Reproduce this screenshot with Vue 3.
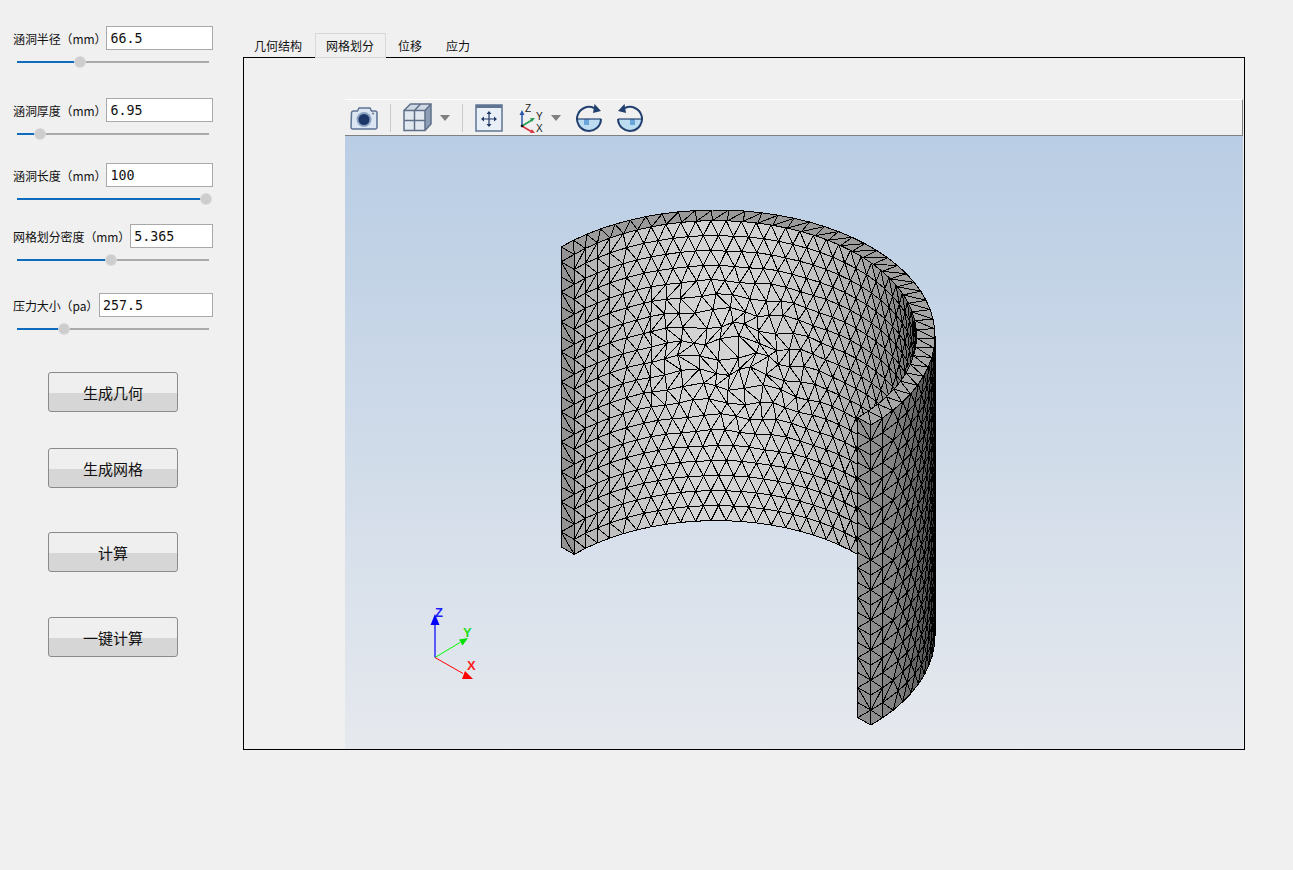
<template>
  <div class="page">
    <div class="side">
      <div class="group" v-for="item in params" :key="item.label">
        <div class="row">
          <label class="lab">{{ item.label }}</label>
          <input class="num" type="text" :value="item.value" :style="{ width: item.box + 'px' }" />
        </div>
        <div class="track">
          <div class="fill" :style="{ width: item.pos + 'px' }"></div>
          <div class="thumb" :style="{ left: item.pos + 'px' }"></div>
        </div>
      </div>
      <button class="btn" v-for="name in buttons" :key="name">{{ name }}</button>
    </div>

    <div class="main">
      <div class="tabs">
        <div class="tab" v-for="(name, index) in tabs" :key="name" :class="{ on: index === 1 }">{{ name }}</div>
      </div>
      <div class="frame">
        <div class="viewer">
          <div class="tools">
            <svg class="camera" width="28" height="26" viewBox="0 0 28 26">
              <path d="M1.5 8a2 2 0 0 1 2-2h4l1.500-3h11l1.500 3h3.500a2 2 0 0 1 2 2v14a2 2 0 0 1-2 2h-22a2 2 0 0 1-2-2z" fill="#dbe6f2" stroke="#5d7392" stroke-width="1.500" />
              <circle cx="14" cy="14.500" r="7.500" fill="#8ba3c2" />
              <circle cx="14" cy="14.500" r="5.500" fill="#1d3768" />
              <circle cx="23" cy="8.500" r="1" fill="#5d7392" />
            </svg>
            <i class="sep first"></i>
            <svg class="cube" width="29" height="29" viewBox="0 0 29 29">
              <path d="M1 7.500h21v20h-21z" fill="#e2e8f0" />
              <path d="M1 7.500l6.500-6.500h20.500l-6 6.500z" fill="#cfd8e4" />
              <path d="M22 7.500l6-6.500v20l-6 6.500z" fill="#8c9db5" />
              <path d="M1 7.500h21v20h-21zM1 7.500l6.500-6.500h20.500v20l-6 6.500M22 7.500l6-6.500M11.500 7.500v20M1 17.500h21M11.500 7.500l6-6.500" fill="none" stroke="#5f6f88" stroke-width="1.500" />
            </svg>
            <i class="drop"></i>
            <i class="sep"></i>
            <svg class="fit" width="28" height="28" viewBox="0 0 28 28">
              <rect x="1" y="1" width="26" height="26" fill="#e9eff6" stroke="#5f7491" stroke-width="1.500" />
              <rect x="1" y="1" width="26" height="3" fill="#5f7491" />
              <path d="M14 9v12M8 15h12" stroke="#1f3864" stroke-width="1.200" />
              <path d="M14 7l-2.500 3h5zM14 23l-2.500-3h5zM6 15l3-2.500v5zM22 15l-3-2.500v5z" fill="#1f3864" />
            </svg>
            <svg class="axes" width="28" height="30" viewBox="0 0 28 30">
              <path d="M3 23v-13" stroke="#2a55a8" stroke-width="1.500" />
              <path d="M3 7l-2.500 5h5z" fill="#2a55a8" />
              <path d="M3 23l10-6" stroke="#1f9a4c" stroke-width="1.500" />
              <path d="M16 15l-5 .2 2 3.500z" fill="#1f9a4c" />
              <path d="M3 23l10 6" stroke="#d8323c" stroke-width="1.500" />
              <path d="M16 30l-5-.2 2-3.500z" fill="#d8323c" />
              <circle cx="3" cy="23" r="1.300" fill="#111" />
              <text x="6" y="9" class="ax">Z</text>
              <text x="17" y="17" class="ax">Y</text>
              <text x="17" y="29" class="ax">X</text>
            </svg>
            <i class="drop two"></i>
            <svg class="rot" width="28" height="28" viewBox="0 0 28 28">
              <path d="M2 15h24a12 12 0 0 1-24 0z" fill="#bcdcf2" />
              <rect x="9" y="15" width="5" height="6" fill="#6aa6dc" />
              <path d="M2 15h24" stroke="#22406f" stroke-width="1.200" />
              <path d="M26 15a12 12 0 1 1-7-11" fill="none" stroke="#22406f" stroke-width="2" />
              <path d="M19.500 0l6.500 7-8 2z" fill="#22406f" />
            </svg>
            <svg class="rot back" width="28" height="28" viewBox="0 0 28 28">
              <path d="M2 15h24a12 12 0 0 1-24 0z" fill="#bcdcf2" />
              <rect x="14" y="15" width="5" height="6" fill="#6aa6dc" />
              <path d="M2 15h24" stroke="#22406f" stroke-width="1.200" />
              <path d="M2 15a12 12 0 1 0 7-11" fill="none" stroke="#22406f" stroke-width="2" />
              <path d="M8.500 0l-6.500 7 8 2z" fill="#22406f" />
            </svg>
          </div>
          <div class="scene">
            <svg width="898" height="613" viewBox="345 136 898 613">
              <g stroke="#000" stroke-width="1" stroke-linejoin="round" shape-rendering="crispEdges">
                <path v-for="(tri, index) in mesh" :key="index" :d="tri.d" :fill="tri.fill" />
              </g>
              <path d="M435 657.500v-34" stroke="#0000ff" stroke-width="1.200" />
              <path d="M435 614l-4.500 11h9z" fill="#0000ff" />
              <path d="M435 657.500l25-15" stroke="#00ff00" stroke-width="1" />
              <path d="M468 638l-9 1.500 3.500 6z" fill="#00e000" />
              <path d="M435 657.500l28 16" stroke="#ff0000" stroke-width="1" />
              <path d="M473 679h-11l3-8z" fill="#ff0000" />
              <text x="435" y="617" class="tag z">Z</text>
              <text x="463" y="637" class="tag y">Y</text>
              <text x="467" y="670" class="tag x">X</text>
            </svg>
          </div>
        </div>
      </div>
    </div>
  </div>
</template>

<script setup>
const params = [
  { label: '涵洞半径（mm）', value: '66.5', box: 107, pos: 63 },
  { label: '涵洞厚度（mm）', value: '6.95', box: 107, pos: 23 },
  { label: '涵洞长度（mm）', value: '100', box: 107, pos: 189 },
  { label: '网格划分密度（mm）', value: '5.365', box: 83, pos: 94 },
  { label: '压力大小（pa）', value: '257.5', box: 114, pos: 47 }
]
const buttons = ['生成几何', '生成网格', '计算', '一键计算']
const tabs = ['几何结构', '网格划分', '位移', '应力']

// half cylinder shell seen from 45 degrees, in page coordinates
const cx = 716
const cy = 336
const rx = 219
const ry = 126
const inner = 0.916
const rowH = 15
const rows = 20

const rad = (t) => (t * Math.PI) / 180
const point = (r, t, z) => [cx + rx * r * Math.cos(rad(t)), cy - ry * r * Math.sin(rad(t)) + z]
const mesh = []

const addTri = (a, b, c, fill) => {
  const f = (p) => p[0].toFixed(1) + ' ' + p[1].toFixed(1)
  mesh.push({ d: 'M' + f(a) + 'L' + f(b) + 'L' + f(c) + 'Z', fill })
}
const gray = (v) => {
  const n = Math.max(0, Math.min(255, Math.round(v)))
  return 'rgb(' + n + ',' + n + ',' + n + ')'
}

// one wall, odd rows are pushed half a column to get the triangle pattern
const addWall = (r, t0, dt, cols, stagger, wobble, shade) => {
  const vert = (i, j) => {
    let u = j + (i % 2 ? 0.5 * stagger(i, j) : 0)
    let v = i
    if (wobble) {
      const g = Math.exp(-((j - 12) * (j - 12) + (i - 9) * (i - 9)) / 18)
      u += 0.5 * g * Math.sin(i * 1.9 + j * 0.8)
      v += 0.4 * g * Math.sin(j * 1.4 - i * 0.7)
    }
    return point(r, t0 + u * dt, v * rowH)
  }
  for (let i = 0; i < rows; i++) {
    for (let j = 0; j < cols; j++) {
      const a = vert(i, j)
      const b = vert(i, j + 1)
      const c = vert(i + 1, j)
      const d = vert(i + 1, j + 1)
      const fill = gray(shade(t0 + (j + 0.5) * dt))
      if (i % 2) {
        addTri(a, d, c, fill)
        addTri(a, b, d, fill)
      } else {
        addTri(a, b, c, fill)
        addTri(b, d, c, fill)
      }
    }
  }
}

const addFace = (t, fill) => {
  for (let i = 0; i < rows; i++) {
    const a = point(1, t, i * rowH)
    const b = point(inner, t, i * rowH)
    const c = point(1, t, (i + 1) * rowH)
    const d = point(inner, t, (i + 1) * rowH)
    if (i % 2) {
      addTri(a, b, d, fill)
      addTri(a, d, c, fill)
    } else {
      addTri(a, b, c, fill)
      addTri(b, d, c, fill)
    }
  }
}

const innerCols = 31
addWall(inner, 135, -135 / innerCols, innerCols, (i, j) => {
  if (j <= 3 || j >= innerCols) return 0
  if (j === 4) return 0.5
  if (j >= 6 && j <= 8 && i >= 5 && i <= 11) return 0
  return 1
}, true, (t) => 69 + 143 * Math.sin(rad(t)))

addFace(135, '#939393')
addFace(-45, '#8e8e8e')

addWall(1, -45, 4.5, 10, (i, j) => (j <= 1 || j >= 10 ? 0 : 1), false, (t) => 40 + 147 * Math.sin(rad(-t)))

const rimCols = 41
for (let j = 0; j < rimCols; j++) {
  const t1 = 135 - (j * 180) / rimCols
  const t2 = 135 - ((j + 1) * 180) / rimCols
  const fill = gray(168 - 15 * Math.max(0, Math.sin(rad(t1))))
  addTri(point(1, t1, 0), point(inner, t1, 0), point(1, t2, 0), fill)
  addTri(point(inner, t1, 0), point(inner, t2, 0), point(1, t2, 0), fill)
}
</script>

<style>
html, body {
  margin: 0;
  background: #f0f0f0;
}
</style>

<style scoped>
.page {
  display: flex;
  width: 1293px;
  height: 870px;
  background: #f0f0f0;
  overflow: hidden;
  font-family: "Liberation Sans", "Noto Sans CJK SC", sans-serif;
  color: #111;
}
.side {
  width: 243px;
  flex: none;
  display: flex;
  flex-direction: column;
  padding-top: 26px;
  box-sizing: border-box;
}
.group:nth-child(2) { margin-top: 35px; }
.group:nth-child(3) { margin-top: 28px; }
.group:nth-child(4) { margin-top: 24px; }
.group:nth-child(5) { margin-top: 32px; }
.row {
  display: flex;
  justify-content: space-between;
  align-items: center;
  width: 200px;
  height: 24px;
  margin-left: 13px;
}
.lab {
  font-size: 12px;
  font-family: "Noto Sans CJK SC", sans-serif;
  white-space: nowrap;
  letter-spacing: -0.1px;
}
.num {
  box-sizing: border-box;
  height: 24px;
  border: 1px solid #a9a9a9;
  background: #fff;
  padding: 0 3px;
  margin: 0;
  outline: none;
  font-family: "DejaVu Sans Mono", monospace;
  font-size: 13.300px;
  color: #111;
}
.track {
  position: relative;
  width: 192px;
  height: 2px;
  margin: 11px 0 0 17px;
  background: #aaa;
}
.fill {
  height: 2px;
  background: #0f6cbd;
}
.thumb {
  position: absolute;
  top: -4px;
  width: 10px;
  height: 10px;
  margin-left: -5px;
  border-radius: 50%;
  background: #cdcdcd;
  box-shadow: 0 0 0 1px #dadada;
}
.btn {
  display: block;
  box-sizing: border-box;
  width: 130px;
  height: 40px;
  margin: 36px 0 0 48px;
  padding: 0;
  border: 1px solid #8a8a8a;
  border-radius: 3px;
  background: linear-gradient(#efefef 52%, #d6d6d6 52%);
  font-family: "Noto Sans CJK SC", sans-serif;
  font-size: 15px;
  color: #111;
}
.group + .btn { margin-top: 42px; }
.btn:nth-child(8) { margin-top: 44px; }
.btn:nth-child(9) { margin-top: 45px; }
.main {
  width: 1002px;
  flex: none;
  padding-top: 33px;
}
.tabs {
  display: flex;
  height: 24px;
  font-size: 12px;
  font-family: "Noto Sans CJK SC", sans-serif;
}
.tab {
  position: relative;
  box-sizing: border-box;
  height: 25px;
  line-height: 25px;
  padding: 0 12px;
}
.tab:first-child {
  padding: 0 13px 0 11px;
}
.tab.on {
  padding: 0 11px 0 10px;
  border: 1px solid #d9d9d9;
  line-height: 24px;
  background: #f0f0f0;
  z-index: 1;
}
.frame {
  box-sizing: border-box;
  height: 693px;
  border: 1px solid #000;
  padding: 41px 1px 0 101px;
}
.tools {
  box-sizing: border-box;
  display: flex;
  align-items: center;
  height: 37px;
  border-top: 1px solid #fff;
  border-right: 1px solid #808080;
  border-bottom: 1px solid #808080;
  background: #f0f0f0;
}
.tools svg {
  flex: none;
}
.camera { margin-left: 5px; }
.sep {
  width: 1px;
  height: 28px;
  margin-left: 12px;
  background: #c9c9c9;
}
.sep.first { margin-right: 12px; }
.drop {
  width: 0;
  height: 0;
  margin-left: 8px;
  border-left: 5.500px solid transparent;
  border-right: 5.500px solid transparent;
  border-top: 6px solid #808080;
}
.fit { margin-left: 12px; }
.axes { margin-left: 16px; }
.drop.two { margin-left: 4px; }
.rot { margin-left: 14px; }
.rot.back { margin-left: 13px; }
.ax {
  font-size: 10px;
  fill: #222;
  font-family: "Liberation Sans", sans-serif;
}
.scene {
  height: 613px;
  background: linear-gradient(#b9cde4, #e6e9ee);
}
.scene svg {
  display: block;
}
.tag {
  font-family: "Liberation Sans", sans-serif;
  font-weight: bold;
  font-size: 13px;
}
.tag.z { fill: #2020ff; }
.tag.y { fill: #20e020; }
.tag.x { fill: #ff2020; }
</style>
